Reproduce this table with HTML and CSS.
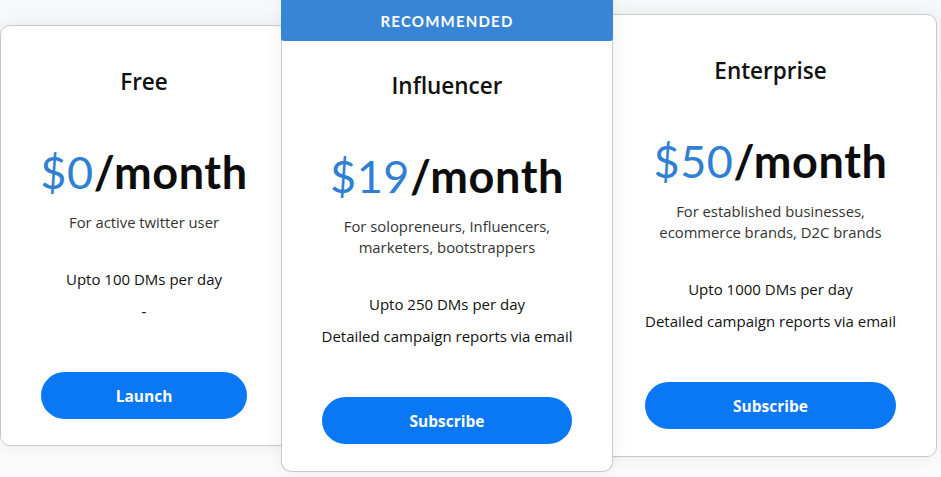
FILE: index.html
```html
<!DOCTYPE html>
<html lang="en">
<head>
<meta charset="utf-8">
<title>Pricing</title>
<link rel="stylesheet" href="styles.css">
</head>
<body>
<main class="plans">
  <section class="card card-free">
    <div class="card-body">
      <h2 class="plan-name">Free</h2>
      <div class="price"><span class="amount">$0</span>/month</div>
      <p class="desc">For active twitter user</p>
      <ul class="features">
        <li>Upto 100 DMs per day</li>
        <li>-</li>
      </ul>
      <button class="cta">Launch</button>
    </div>
  </section>
  <section class="card card-featured">
    <div class="ribbon">RECOMMENDED</div>
    <div class="card-body body-featured">
      <h2 class="plan-name">Influencer</h2>
      <div class="price"><span class="amount">$19</span>/month</div>
      <p class="desc">For solopreneurs, Influencers,<br>marketers, bootstrappers</p>
      <ul class="features">
        <li>Upto 250 DMs per day</li>
        <li>Detailed campaign reports via email</li>
      </ul>
      <button class="cta">Subscribe</button>
    </div>
  </section>
  <section class="card card-enterprise">
    <div class="card-body">
      <h2 class="plan-name">Enterprise</h2>
      <div class="price"><span class="amount">$50</span>/month</div>
      <p class="desc">For established businesses,<br>ecommerce brands, D2C brands</p>
      <ul class="features">
        <li>Upto 1000 DMs per day</li>
        <li>Detailed campaign reports via email</li>
      </ul>
      <button class="cta">Subscribe</button>
    </div>
  </section>
</main>
</body>
</html>
```
FILE: styles.css
```css
* { box-sizing: border-box; }
html, body { margin: 0; padding: 0; }
body {
  width: 941px;
  height: 477px;
  overflow: hidden;
  background: linear-gradient(180deg, #f6f8fa 0%, #fbfcfd 40%, #fbfbfc 100%);
  font-family: "Open Sans", "Lato", sans-serif;
  color: #111;
}
.plans {
  display: flex;
  align-items: flex-start;
}
.card {
  background: #fff;
  border: 1px solid #c9c9c9;
  border-radius: 10px;
  box-shadow: 0 0 18px rgba(0, 0, 0, 0.07);
  flex: none;
}
.card-free {
  width: 288px;
  margin-top: 25px;
}
.card-featured {
  width: 332px;
  margin-left: -7px;
  z-index: 2;
  border-top: none;
  border-radius: 0 0 10px 10px;
}
.card-enterprise {
  width: 333px;
  margin-left: -9px;
  margin-top: 14px;
  z-index: 1;
}
.ribbon {
  height: 41px;
  margin: 0 -1px;
  background: #3985d5;
  border-radius: 0 0 3px 3px;
  color: #fff;
  font-family: "Lato", sans-serif;
  font-weight: 700;
  font-size: 15px;
  letter-spacing: 1.2px;
  display: flex;
  align-items: center;
  justify-content: center;
}
.card-body {
  padding: 42px 40px 26px;
  display: flex;
  flex-direction: column;
  align-items: center;
  text-align: center;
}
.card-featured .card-body,
.card-enterprise .card-body { padding-bottom: 27px; }
.body-featured { padding-top: 31px; }
.plan-name {
  margin: 0;
  font-size: 22.5px;
  line-height: 28px;
  font-weight: 600;
  color: #111;
}
.price {
  margin-top: 52px;
  font-family: "Lato", sans-serif;
  font-size: 45px;
  line-height: 48px;
  font-weight: 700;
  letter-spacing: 0.6px;
  color: #0d0d0d;
  white-space: nowrap;
}
.amount { color: #2f7fd3; font-weight: 400; }
.desc {
  margin: 16px 0 0;
  font-size: 14.8px;
  line-height: 21px;
  color: #333;
  white-space: nowrap;
}
.features {
  list-style: none;
  margin: 36px 0 0;
  padding: 0;
  font-size: 15px;
  line-height: 21px;
  color: #111;
  white-space: nowrap;
}
.features li + li { margin-top: 11px; }
.cta {
  margin-top: 50px;
  width: 100%;
  height: 47px;
  border: none;
  border-radius: 24px;
  background: #0a78f4;
  color: #fff;
  font-family: inherit;
  font-size: 15.5px;
  font-weight: 700;
}
```
